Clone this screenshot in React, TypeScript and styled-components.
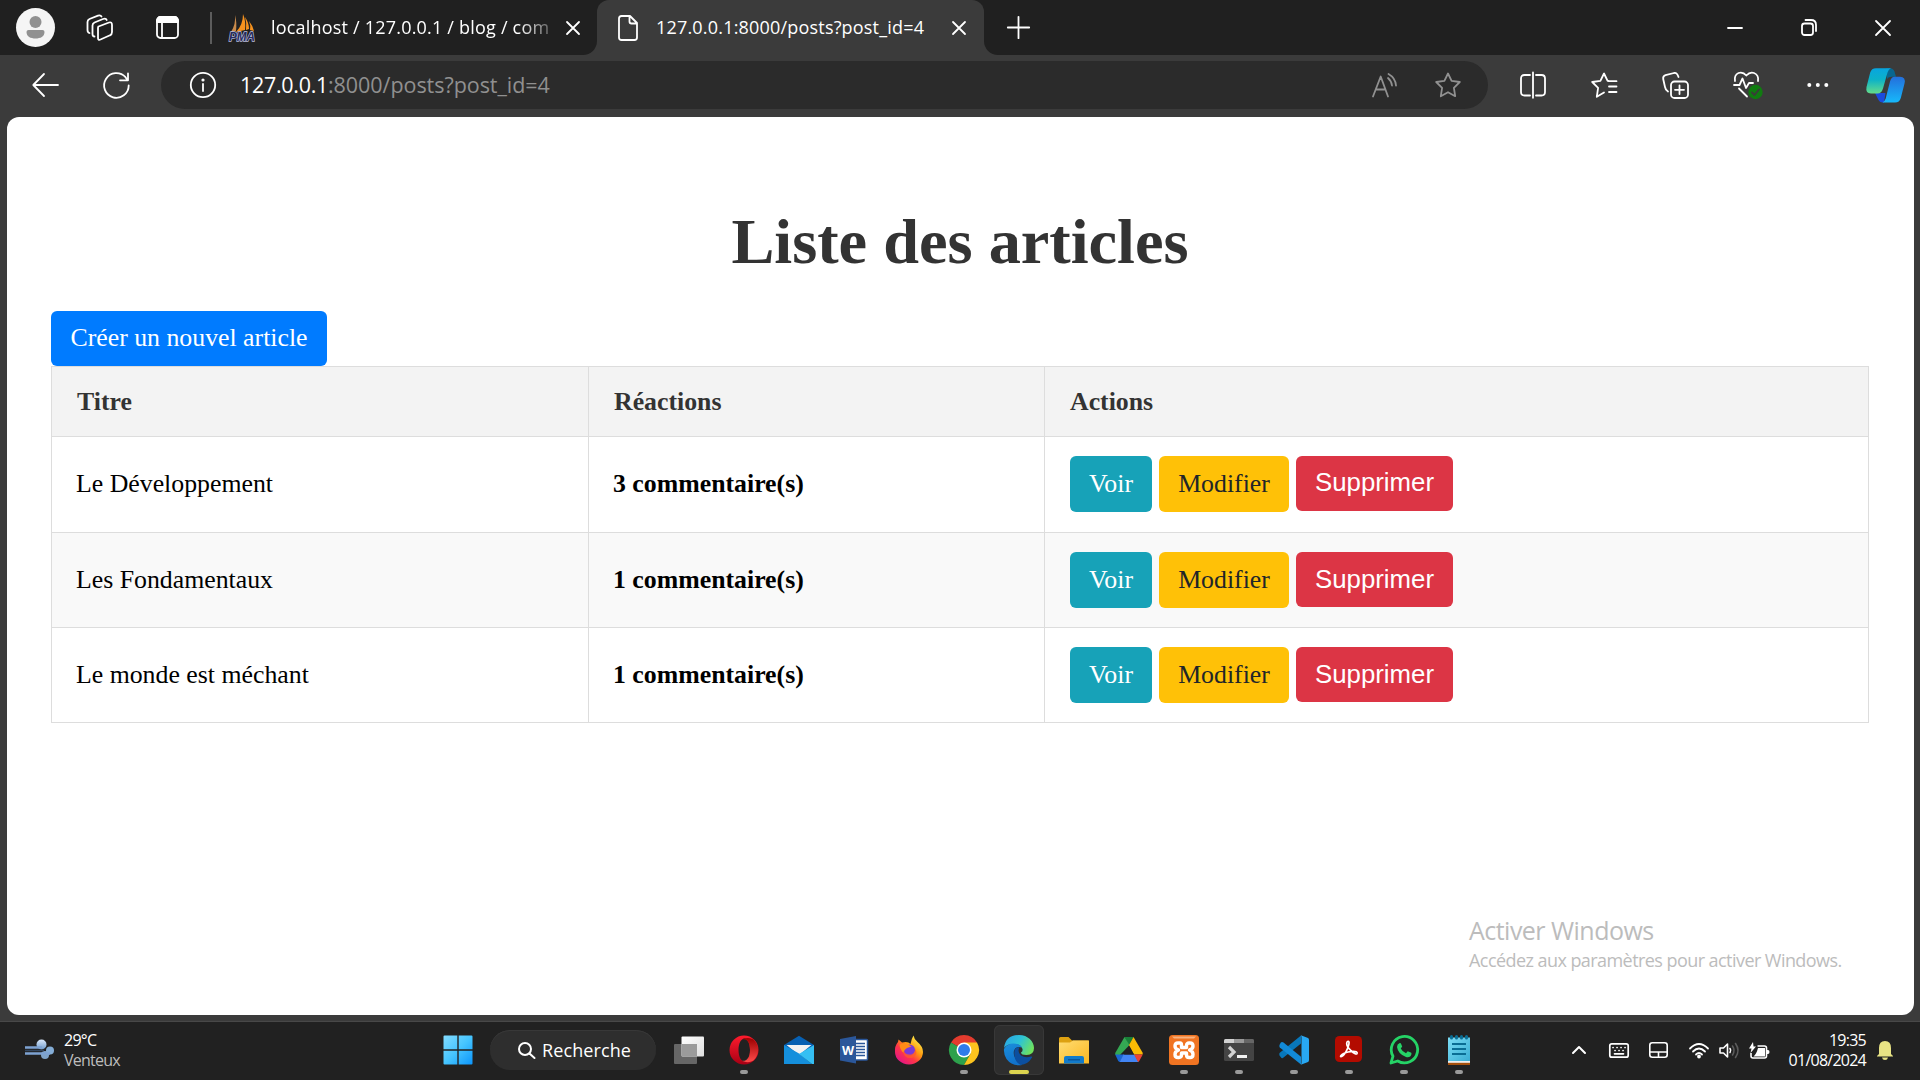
import React from 'react';
import styled, { createGlobalStyle } from 'styled-components';

const UI = '"Open Sans", "Noto Sans", sans-serif';
const SERIF = '"Liberation Serif", "Times New Roman", serif';

const Global = createGlobalStyle`
  *, *::before, *::after { box-sizing: border-box; }
  html, body { margin: 0; padding: 0; background: #202020; overflow: hidden; }
  svg { display: block; flex: none; overflow: visible; }
`;

const Screen = styled.div`
  width: 1920px;
  height: 1080px;
  display: flex;
  flex-direction: column;
  background: #3b3b3b;
  overflow: hidden;
  font-family: ${UI};
  color: #fff;
`;

/* Tab strip */
const TabStrip = styled.header`
  display: flex;
  height: 55px;
  flex: none;
`;
const StripStart = styled.div`
  width: 597px;
  height: 55px;
  display: flex;
  align-items: center;
  padding-left: 16px;
  background: #202020;
  border-bottom-right-radius: 14px;
`;
const StripEnd = styled.div`
  flex: 1;
  height: 55px;
  display: flex;
  align-items: center;
  justify-content: space-between;
  padding: 0 29px 0 23px;
  background: #202020;
  border-bottom-left-radius: 14px;
`;
const ActiveSlot = styled.div`
  width: 387px;
  background: linear-gradient(#202020 50%, #3b3b3b 50%);
`;
const ActiveTab = styled.div`
  height: 55px;
  display: flex;
  align-items: center;
  padding-left: 21px;
  background: #3b3b3b;
  border-radius: 12px 12px 0 0;
`;
const Slot = styled.span<{ $ml?: number }>`
  display: flex;
  flex: none;
  margin-left: ${p => p.$ml ?? 0}px;
`;
const Divider = styled.span`
  width: 2px;
  height: 32px;
  margin-left: 31px;
  background: #5c5c5c;
`;
const TabLabel = styled.span<{ $w: number; $ls: number; $fade?: boolean }>`
  width: ${p => p.$w}px;
  white-space: nowrap;
  font-size: 18px;
  line-height: 26px;
  padding-bottom: 1px;
  letter-spacing: ${p => p.$ls}px;
  ${p => p.$fade && 'mask-image: linear-gradient(90deg, #000 88%, transparent 104%);'}
`;
const WindowButtons = styled.div`
  display: flex;
  align-items: center;
  gap: 58px;
`;

/* Toolbar */
const Toolbar = styled.nav`
  height: 62px;
  flex: none;
  display: flex;
  align-items: center;
  padding: 0 0 2px 32px;
`;
const AddressBar = styled.div`
  width: 1327px;
  height: 48px;
  margin-left: 31px;
  padding: 0 27px 0 29px;
  display: flex;
  align-items: center;
  border-radius: 24px;
  background: #2b2b2b;
`;
const Url = styled.span`
  flex: 1;
  margin-left: 24px;
  font-size: 21.5px;
  line-height: 30px;
  letter-spacing: -0.05px;
  color: #909090;
  white-space: nowrap;
`;
const Host = styled.span`
  letter-spacing: -0.3px;
  color: #fff;
`;

/* Page */
const Frame = styled.div`
  flex: 1;
  padding: 0 6px 6px 7px;
`;
const Page = styled.main`
  position: relative;
  height: 898px;
  padding: 84px 45px 0 44px;
  border-radius: 12px;
  background: #fff;
  font-family: ${SERIF};
  font-size: 25.8px;
  color: #000;
`;
const Title = styled.h1`
  margin: 0;
  height: 110px;
  font-size: 64.3px;
  line-height: 82px;
  font-weight: 700;
  text-align: center;
  color: #333;
`;
const Button = styled.button<{ $bg: string; $fg?: string; $w: number; $h?: number; $sans?: boolean }>`
  width: ${p => p.$w}px;
  height: ${p => p.$h ?? 56}px;
  padding: 0 0 ${p => (p.$sans ? 2 : 0)}px;
  display: flex;
  align-items: center;
  justify-content: center;
  border: 0;
  border-radius: 6px;
  background: ${p => p.$bg};
  color: ${p => p.$fg ?? '#fff'};
  font-family: ${p => (p.$sans ? '"Liberation Sans", Arial, sans-serif' : SERIF)};
  font-size: 25.8px;
  line-height: 30px;
`;
const CreateButton = styled(Button)`
  padding-bottom: 2px;
`;
const Table = styled.table`
  width: 1818px;
  table-layout: fixed;
  border-collapse: collapse;
`;
const HeadCell = styled.th<{ $w?: number }>`
  width: ${p => (p.$w ? p.$w + 'px' : 'auto')};
  height: 70px;
  padding: 0 25px;
  border: 1px solid #ddd;
  background: #f3f3f3;
  color: #333;
  text-align: left;
`;
const BodyRow = styled.tr<{ $h: number }>`
  height: ${p => p.$h}px;
  &:nth-child(even) { background: #f9f9f9; }
  &:first-child > td { padding-bottom: 2px; }
`;
const Cell = styled.td`
  padding: 0 24px;
  border: 1px solid #ddd;
`;
const Actions = styled.div`
  display: flex;
  align-items: flex-start;
  gap: 7px;
  padding-left: 1px;
`;
const Watermark = styled.aside`
  position: absolute;
  left: 1462px;
  top: 796px;
  font-family: ${UI};
  color: #bcbcbc;
  white-space: nowrap;
`;
const WatermarkTitle = styled.div`
  font-size: 25px;
  line-height: 34px;
  letter-spacing: -0.53px;
`;
const WatermarkText = styled.div`
  font-size: 18px;
  line-height: 26px;
  letter-spacing: -0.56px;
`;

/* Taskbar */
const Taskbar = styled.footer`
  height: 59px;
  flex: none;
  display: flex;
  align-items: stretch;
  padding: 0 27px 2px 25px;
  background: #212121;
  border-top: 1px solid #484848;
`;
const Weather = styled.div`
  width: 405px;
  display: flex;
  align-items: center;
  gap: 9px;
`;
const SmallText = styled.div<{ $right?: boolean }>`
  display: flex;
  flex-direction: column;
  font-size: 16px;
  line-height: 20px;
  letter-spacing: -0.75px;
  white-space: nowrap;
  text-align: ${p => (p.$right ? 'right' : 'left')};
`;
const Muted = styled.span`
  color: #bdbdbd;
`;
const Apps = styled.div`
  display: flex;
  flex: 1;
  align-items: center;
`;
const AppButton = styled.div<{ $active?: boolean }>`
  width: 50px;
  height: 50px;
  margin: 0 2.5px;
  display: flex;
  flex-direction: column;
  align-items: center;
  padding-top: 10px;
  border-radius: 6px;
  ${p => p.$active && 'background: #2e2e2e; box-shadow: inset 0 0 0 1px #383838;'}
`;
const Mark = styled.span<{ $active?: boolean }>`
  width: ${p => (p.$active ? 20 : 8)}px;
  height: 4px;
  margin-top: 5px;
  border-radius: 2px;
  background: ${p => (p.$active ? '#dcd44f' : '#9a9a9a')};
`;
const Search = styled.div`
  width: 166px;
  height: 40px;
  margin: 0 5px 0 5px;
  padding-left: 28px;
  display: flex;
  align-items: center;
  gap: 6px;
  border-radius: 20px;
  background: #2e2e2e;
  box-shadow: inset 0 1px 0 #383838;
  font-size: 18px;
  letter-spacing: 0.1px;
`;
const Tray = styled.div`
  display: flex;
  align-items: center;
`;

/* Line icons */
type LineProps = { w: number; h?: number; sw?: number; c?: string; children: React.ReactNode };
const Line = ({ w, h = w, sw = 1.8, c = '#fff', children }: LineProps) => (
  <svg width={w} height={h} viewBox={`0 0 ${w} ${h}`} fill="none" stroke={c} strokeWidth={sw} strokeLinecap="round" strokeLinejoin="round">
    {children}
  </svg>
);
const Cross = ({ s, sw = 1.8 }: { s: number; sw?: number }) => (
  <Line w={s} sw={sw}><path d={`M1 1L${s - 1} ${s - 1}M${s - 1} 1L1 ${s - 1}`} /></Line>
);
const Avatar = () => (
  <svg width="39" height="39" viewBox="0 0 39 39">
    <circle cx="19.5" cy="19.5" r="19.5" fill="#f5f5f5" />
    <circle cx="19.5" cy="14" r="6" fill="#919191" />
    <path d="M12.5 22h14a2 2 0 0 1 2 2c0 4.500-4 6.500-9 6.500s-9-2-9-6.500a2 2 0 0 1 2-2z" fill="#919191" />
  </svg>
);
const Workspaces = () => (
  <Line w={28}>
    <path d="M12.500 12.500L23 8.500Q26 7.500 26 11V18Q26 20.500 24 21.300L14.500 25.500Q12 26.500 12 24V14Q12 13 12.500 12.500z" />
    <path d="M8.500 22.500Q6.500 22.500 6.500 20V11.500Q6.500 9.500 8.500 8.500L17 5Q20 4 20.700 6" />
    <path d="M3.500 19Q1.500 18.500 1.500 16V8Q1.500 6 3.500 5L12 1.700Q14.500 .8 15.500 2.500" />
  </Line>
);
const TabActions = () => (
  <Line w={23}><rect x="1" y="1" width="21" height="21" rx="3.500" /><path d="M1 4.500a3.500 3.500 0 0 1 3.500-3.500h14a3.500 3.500 0 0 1 3.500 3.500V6H1z" fill="#fff" /><path d="M6 7V22" /></Line>
);
const PmaLogo = () => (
  <svg width="27" height="28" viewBox="0 0 27 28">
    <path d="M6 1Q7 10 2 18L7 17Q8 8 6 1z" fill="#c98b4b" />
    <path d="M14 0Q14 11 7 18L16 16Q17 7 14 0z" fill="#f6921e" />
    <path d="M16 3Q20 9 20 15L17 16Q18 9 16 3zM20 7Q24 12 25 17L21 16Q22 12 20 7z" fill="#f6921e" />
    <text x="0" y="27" textLength="26" lengthAdjust="spacingAndGlyphs" fontFamily="Liberation Sans, sans-serif" fontSize="12" fontWeight="700" fontStyle="italic" fill="#272c5c" stroke="#b9bddd" strokeWidth="1.300" paintOrder="stroke">PMA</text>
  </svg>
);
const PageIcon = () => (
  <Line w={20} h={26}><path d="M3.500 1H12L19 8V22.500Q19 25 16.500 25H3.500Q1 25 1 22.500V3.500Q1 1 3.500 1zM11.500 1V6.500Q11.500 8.500 13.500 8.500H19" /></Line>
);
const Plus = () => <Line w={23}><path d="M11.500 .8V22.200M.8 11.500H22.200" /></Line>;
const Minimize = () => <Line w={16}><path d="M1 8H15" /></Line>;
const Restore = () => (
  <Line w={16} h={17}><rect x="1" y="4.500" width="11" height="11.500" rx="2.500" /><path d="M4.500 1H10Q15 1 15 6V12" /></Line>
);
const Back = () => <Line w={27} h={24}><path d="M26 12H1.500M12 1L1.300 12L12 23" /></Line>;
const Refresh = () => <Line w={27}><path d="M25.700 13.500A12.300 12.300 0 1 1 22.500 5.200L24.500 8M25 1.500V8.300H17" /></Line>;
const Info = () => (
  <Line w={26}><circle cx="13" cy="13" r="12.200" /><path d="M13 12V19" /><circle cx="13" cy="8" r=".7" fill="#fff" /></Line>
);
const ReadAloud = () => (
  <Line w={25} c="#919191"><path d="M1 23.500L8.700 3.500L16 23.500M4 16.500H13.500M16 5Q19.500 8 20 12.500M16.500 1Q23.500 5 24 12.500" /></Line>
);
const starPath = 'M13 1.500L16.600 8.900L24.800 10L18.900 15.800L20.200 24.200L13 20.200L5.800 24.200L7.100 15.800L1.200 10L9.400 8.900z';
const Star = () => <Line w={26} c="#919191"><path d={starPath} /></Line>;
const Split = () => (
  <Line w={26}><path d="M10 3H4.500Q1 3 1 6.500V20Q1 23.500 4.500 23.500H10M16 3H21.500Q25 3 25 6.500V20Q25 23.500 21.500 23.500H16M13 .5V25.800" /></Line>
);
const Favorites = () => (
  <Line w={27}><path d="M18 9.200H25.500M18 14.500H25.500M18 20H25.500M17.500 9L16.600 8.900L13 1.500L9.400 8.900L1.200 10L7.100 15.800L5.800 24.800L13 20.500" /></Line>
);
const Collections = () => (
  <Line w={27}><rect x="9" y="9.500" width="17" height="16.500" rx="3.500" /><path d="M17.500 13.500V22M13 17.800H22M6 19.500Q3.500 18 3 15L1.200 7Q.8 4 3.500 3.200L12 1Q15 .3 16.500 5" /></Line>
);
const Health = () => (
  <svg width="30" height="28" viewBox="0 0 30 28" fill="none" stroke="#fff" strokeWidth="1.800" strokeLinecap="round" strokeLinejoin="round">
    <path d="M2 10Q1 4 5.500 2Q10 .5 13.300 4.500Q17 .5 21 2Q26 4 25 10M1 14H6.500L9.500 7.500L13 17L16 12H20M6 17.500L14 25.500" />
    <circle cx="22.500" cy="21" r="7.200" fill="#107c10" stroke="none" />
    <path d="M19 21.500L21.500 24L26 18.500" stroke="#3b3b3b" />
  </svg>
);
const More = () => (
  <svg width="22" height="6" viewBox="0 0 22 6" fill="#fff"><circle cx="2.300" cy="3" r="2" /><circle cx="10.800" cy="3" r="2" /><circle cx="19.300" cy="3" r="2" /></svg>
);
const Copilot = () => (
  <svg width="39" height="35" viewBox="0 0 39 35">
    <defs>
      <linearGradient id="cp1" x1="0" y1="0" x2="0" y2="1"><stop offset="0" stopColor="#08a5e0" /><stop offset=".45" stopColor="#0cb2c8" /><stop offset="1" stopColor="#64dc8a" /></linearGradient>
      <linearGradient id="cp2" x1="0" y1="0" x2="0" y2="1"><stop offset="0" stopColor="#246fdc" /><stop offset="1" stopColor="#16b9fb" /></linearGradient>
    </defs>
    <path d="M20 .2H24Q27.500 .5 28.500 3.500L30 8.800H25.500Q22.500 8.800 21 11z" fill="#08668f" />
    <path d="M9 25H19.500L18 34.500H17Q13.500 34.500 12 31z" fill="#1b4bdc" />
    <path d="M10 .2H25Q22.500 1 21.500 4.500L17 20.500Q15.500 25.500 11.500 25.500H5Q-.7 25.500 .5 19L4.200 4.500Q5.500 .2 10 .2z" fill="url(#cp1)" />
    <path d="M28.500 8.800H34Q40 9 38.500 15.500L34.800 30Q33.500 34.500 29 34.500H16.500Q18.800 33.500 19.700 30.500L24 13.500Q25.200 8.800 28.500 8.800z" fill="url(#cp2)" />
  </svg>
);

/* Taskbar icons, each on a 30px square */
const Ico = ({ children }: { children: React.ReactNode }) => <svg width="30" height="30" viewBox="0 0 30 30">{children}</svg>;
const Start = () => (
  <Ico>
    <defs><linearGradient id="win" x1="0" y1="0" x2="1" y2="1"><stop stopColor="#83dcff" /><stop offset=".5" stopColor="#46c5ff" /><stop offset="1" stopColor="#0c95fb" /></linearGradient></defs>
    <path d="M.5 1.500a1 1 0 0 1 1-1H14.300V14.300H.5zM15.700 .5H28.500a1 1 0 0 1 1 1V14.300H15.700zM.5 15.700H14.300V29.500H1.500a1 1 0 0 1-1-1zM15.700 15.700H29.500V28.500a1 1 0 0 1-1 1H15.700z" fill="url(#win)" />
  </Ico>
);
const TaskView = () => (
  <Ico>
    <defs><linearGradient id="tv" x1="0" y1="0" x2="1" y2="1"><stop stopColor="#fff" /><stop offset="1" stopColor="#dedede" /></linearGradient></defs>
    <rect x="0" y="9" width="23" height="20" rx="1" fill="#666" /><rect x="7.500" y="1.500" width="22.500" height="20" rx="1" fill="url(#tv)" /><path d="M7.500 9H23V21.500H8.500a1 1 0 0 1-1-1z" fill="#9b9b9b" />
  </Ico>
);
const Opera = () => (
  <Ico>
    <defs><linearGradient id="op" x1="0" y1="0" x2="0" y2="1"><stop stopColor="#ff1b2d" /><stop offset="1" stopColor="#a70014" /></linearGradient><linearGradient id="op2" x1="0" y1="0" x2="0" y2="1"><stop stopColor="#9c0000" /><stop offset="1" stopColor="#ff4b4b" /></linearGradient></defs>
    <path d="M15 .5a14.500 14.500 0 1 0 0 29 14.500 14.500 0 0 0 0-29zM15.500 3.500C19 3.500 21 8.500 21 15S19 26.500 15.500 26.500 9.500 21.500 9.500 15 12 3.500 15.500 3.500z" fill="url(#op)" fillRule="evenodd" />
    <path d="M11.500 5.500C17 1 23.500 3.500 25 5A14.500 14.500 0 0 1 25 25C22 27.500 16 28.500 11.500 24.500C14 27.500 21 26 21 15S14.500 2.500 11.500 5.500z" fill="url(#op2)" />
  </Ico>
);
const Mail = () => (
  <Ico>
    <path d="M0 10L15 .8L30 10V20H0z" fill="#0760b2" /><path d="M2.500 10H27.500L15 20z" fill="#f2f2f2" /><path d="M0 10V29H28L15 18.500z" fill="#158fdc" /><path d="M15 19L28 29H30V10z" fill="#35bff3" />
  </Ico>
);
const Word = () => (
  <Ico>
    <rect x="13" y="4.500" width="15.500" height="20.500" rx="1" fill="#fff" stroke="#2b579a" strokeWidth="1.500" />
    <path d="M16 8.500H26M16 11.500H26M16 14.500H26M16 17.500H26M16 20.500H26" stroke="#2b579a" strokeWidth="1.600" />
    <path d="M1 4L17 1V28.500L1 25.500z" fill="#2b579a" />
    <text x="9" y="19.500" textAnchor="middle" fontFamily="Open Sans, sans-serif" fontWeight="700" fontSize="12.500" fill="#fff">W</text>
  </Ico>
);
const Firefox = () => (
  <Ico>
    <defs><linearGradient id="ff" x1=".9" y1=".1" x2=".2" y2=".95"><stop stopColor="#fff44f" /><stop offset=".4" stopColor="#ff980e" /><stop offset=".65" stopColor="#ff3647" /><stop offset="1" stopColor="#e31587" /></linearGradient></defs>
    <path d="M19.500 .5Q20 4 23.500 7Q29 11.500 29 17A14 12.500 0 0 1 1 17Q.5 11 4 7L4.500 4.500L8 7.500Q14 6 16.500 9Q17.500 3.500 19.500 .5z" fill="url(#ff)" />
    <circle cx="15.500" cy="15" r="5.500" fill="#7a3ad8" /><path d="M5.500 9.500Q11 6.500 17.500 11.500L13 13Q10 14.500 9.500 18Q6 15 5.500 9.500z" fill="#ff8a16" /><path d="M9 16Q12 20 17 19.500Q22 18 21 13Q25 20 18 23Q10 24 9 16z" fill="#ff5a2c" opacity=".75" />
  </Ico>
);
const Chrome = () => (
  <Ico>
    <path d="M15 15L2 7.500A15 15 0 0 1 28 7.500z" fill="#e33b2e" /><path d="M15 15L2 7.500A15 15 0 0 0 15 30L21.500 18.700z" fill="#2da14c" /><path d="M15 7.500H28A15 15 0 0 1 15 30L21.500 18.700z" fill="#fcc31e" /><circle cx="15" cy="15" r="7.500" fill="#fff" /><circle cx="15" cy="15" r="6" fill="#2f7bea" />
  </Ico>
);
const Edge = () => (
  <Ico>
    <defs>
      <linearGradient id="eg1" x1="0" y1=".2" x2="1" y2=".6"><stop stopColor="#2aa5e5" /><stop offset=".5" stopColor="#2dc3d5" /><stop offset="1" stopColor="#70e35b" /></linearGradient>
      <linearGradient id="eg2" x1="0" y1="0" x2=".3" y2="1"><stop stopColor="#1b8edb" /><stop offset="1" stopColor="#1172cb" /></linearGradient>
    </defs>
    <path d="M0 13Q1.500 0 15 0C24 0 30 6.500 30 13Q30 20 22.500 20Q17 20 17 17.500Q19 16.500 18.500 14Q17 9 9 9Q3 9 0 13z" fill="url(#eg1)" />
    <path d="M0 14Q3 8.500 9.500 8.500Q16 8.800 18 12.500Q12 10.500 10 15.500Q8.500 22 15 27L18 30Q8 31.500 2.500 24Q-.5 19 0 14z" fill="url(#eg2)" />
    <path d="M10.500 15Q12 11.500 15.500 12.500Q13 17 17 20.500Q21.500 23.500 27 21.500Q28.500 21 28 22.500Q24 29.500 16.500 30Q9 26 10.500 15z" fill="#0c4f9f" />
  </Ico>
);
const Explorer = () => (
  <Ico>
    <defs><linearGradient id="ex" x1="0" y1="0" x2="1" y2="1"><stop stopColor="#ffdc72" /><stop offset="1" stopColor="#fbb822" /></linearGradient></defs>
    <path d="M0 3.500Q0 2 1.500 2H9.500L13 5.500H29Q30 5.500 30 7V12H0z" fill="#dda111" /><path d="M0 7.500H11L14 5.500H30V28.500H0z" fill="url(#ex)" /><path d="M5 28.500V23Q5 21 7 21H23Q25 21 25 23V28.500z" fill="#127bcb" /><path d="M9 24.800H21" stroke="#0b4f92" strokeWidth="1.200" />
  </Ico>
);
const Drive = () => (
  <Ico>
    <path d="M10.500 2H19.500L15 10z" fill="#188038" /><path d="M10.500 2L1.500 17.500Q.7 19 1.500 20H6L15.500 10z" fill="#34a853" /><path d="M19.500 2L28.500 17.500Q29 18.500 28.500 19.500H20L15 10z" fill="#fbbc04" /><path d="M1.200 19.500H10L6 27Q4.500 26.500 4 25.500z" fill="#1967d2" /><path d="M9.500 19.500H20.500L24.500 27H5.700z" fill="#4285f4" /><path d="M20 19.500H28.800L25.500 25.500Q25 26.500 24 27z" fill="#ea4335" /><path d="M15 11L20 19.500H10z" fill="#212121" />
  </Ico>
);
const Xampp = () => (
  <Ico>
    <rect width="30" height="30" rx="3.500" fill="#f07422" /><path d="M3 1.500H27L25 3.500H5z" fill="#f8b27f" />
    <path d="M11 8H9Q6 8 6 11Q6 14 9.500 15Q6 16 6 19.500Q6 22.500 9 22.500H10Q12.500 22.500 12.500 20V18H17.500V20Q17.500 22.500 20 22.500H21Q24 22.500 24 19.500Q24 16 20.500 15Q24 14 24 11Q24 8 21 8H20Q17.500 8 17.500 10.500V12.500H12.500V10Q12.500 8 11 8z" fill="none" stroke="#fff" strokeWidth="3.400" strokeLinejoin="round" />
  </Ico>
);
const Terminal = () => (
  <Ico>
    <rect x="0" y="4" width="30" height="22" rx="1.500" fill="#444" /><path d="M0 8V5.500Q0 4 1.500 4H10V8z" fill="#d1d1d1" /><path d="M10 4H20V8H10z" fill="#999" /><path d="M20 4H28.500Q30 4 30 5.500V8H20z" fill="#666" /><path d="M5 12L10 17L5 22" fill="none" stroke="#d2d2d2" strokeWidth="3.200" /><path d="M13 21.500H23" stroke="#f2f2f2" strokeWidth="3" />
  </Ico>
);
const VsCode = () => (
  <Ico>
    <path d="M2.500 23L.5 20.500Q0 19 .5 18L22 .5V8.500L4.500 22.500Q3.500 23.500 2.500 23z" fill="#0877ba" /><path d="M.5 10Q0 11 .8 12.500L22 29.500V21.700L4.500 7.500Q3 6.500 1.800 7.500z" fill="#128ad7" /><path d="M21.800 .3L29 3Q30 3.600 30 5V25Q30 26.500 29 27L21.800 29.800Q22.500 29 22.500 27.500V2.500Q22.500 1 21.800 .3z" fill="#28a8f3" />
  </Ico>
);
const Acrobat = () => (
  <Ico>
    <rect x="1" y="1" width="27" height="26" rx="4.500" fill="#b30b00" />
    <path d="M13.500 6.500C17.500 4.500 13 17 9 20.500C4.500 24 6.500 18.500 14 17C20 15.800 24 16.500 23 18.500C21.500 21 12.500 12.500 12.700 8.500Q12.800 6.800 13.500 6.500z" fill="none" stroke="#fff" strokeWidth="1.700" />
  </Ico>
);
const WhatsApp = () => (
  <Ico>
    <path d="M2 28L4 21.200A13.200 13.200 0 1 1 8.700 26z" fill="none" stroke="#25d366" strokeWidth="2.800" strokeLinejoin="round" />
    <path d="M10.700 8Q8 9 8 12Q9 19 17 22Q21.500 23 22.500 19L22.300 17.800L18.700 16.200L17 18.300Q13.500 17 11.800 13.500L13.200 11.500L11.800 8.200z" fill="#25d366" />
  </Ico>
);
const Notepad = () => (
  <Ico>
    <defs><linearGradient id="np" x1="0" y1="0" x2="1" y2="1"><stop stopColor="#7bddf5" /><stop offset="1" stopColor="#38acd3" /></linearGradient></defs>
    <path d="M4 2.500H26V27H4z" fill="url(#np)" /><path d="M4 26H26V28H4z" fill="#eee" /><path d="M4 27.800H26V30H4z" fill="#a5500c" /><path d="M8 9H22M8 14H22M8 19H22" stroke="#0a6d94" strokeWidth="2" />
    <path d="M7.500 1.500V3M12.500 1.500V3M17.500 1.500V3M22.500 1.500V3" stroke="#0a6d94" strokeWidth="3" strokeLinecap="round" />
  </Ico>
);
const Wind = () => (
  <svg width="30" height="22" viewBox="0 0 30 22">
    <defs><linearGradient id="wd" x1="0" y1="0" x2="0" y2="1"><stop stopColor="#d9e8fb" /><stop offset="1" stopColor="#6f9bcc" /></linearGradient></defs>
    <circle cx="20" cy="16" r="4" fill="#7fa3c9" /><circle cx="25" cy="11.500" r="4" fill="#84add6" /><circle cx="16.500" cy="5.500" r="5" fill="url(#wd)" />
    <path d="M0 8.500H17M0 14.500H25" stroke="#7da2d2" strokeWidth="2.600" /><path d="M0 11.500H19" stroke="#33465e" strokeWidth="1.500" />
  </svg>
);
const Chevron = () => <Line w={14} h={8} sw={2}><path d="M1 7L7 1L13 7" /></Line>;
const Keyboard = () => (
  <Line w={20} h={15} sw={1.7}><rect x=".8" y=".8" width="18.400" height="13.400" rx="2" /><path d="M4 4.500H4.100M8 4.500H8.100M12 4.500H12.100M16 4.500H16.100M6 7.500H6.100M10 7.500H10.100M14 7.500H14.100M5.500 10.800H14.500" /></Line>
);
const Touchpad = () => <Line w={19} h={16} sw={1.6}><rect x=".8" y=".8" width="17.400" height="14.400" rx="2.500" /><path d="M1 10H18M9.500 10V15" /></Line>;
const Wifi = () => (
  <Line w={20} h={15} sw={1.8}><path d="M1 5.500Q10-3.500 19 5.500M4 8.500Q10 2.500 16 8.500M7 11.500Q10 8.500 13 11.500" /><circle cx="10" cy="13.500" r="1" fill="#fff" /></Line>
);
const Speaker = () => (
  <Line w={20} h={17} sw={1.6}><path d="M1 6H4.500L8.500 2V15L4.500 11H1zM11 6.500Q12.500 8.500 11 10.500" /><path d="M13.500 4Q16.500 8.500 13.500 13M16.500 1.500Q21.500 8.500 16.500 15.500" stroke="#5c5c5c" /></Line>
);
const Battery = () => (
  <svg width="21" height="17" viewBox="0 0 21 17">
    <path d="M8.500 4H15.500Q17.500 4 17.500 6V14Q17.500 16 15.500 16H4Q2 16 2 14V11" fill="none" stroke="#fff" strokeWidth="1.600" /><path d="M9 6H16V14.500H4.500Q7.500 12 9 6z" fill="#fff" /><path d="M18 8H19Q20.500 8 20.500 10T19 12H18z" fill="#fff" /><path d="M4 0L0 6.500H2.500L1.500 11L7 4.500H4.500z" fill="#fff" />
  </svg>
);
const Bell = () => (
  <svg width="16" height="19" viewBox="0 0 16 19"><path d="M2 13V7Q2 0 8 0T14 7V13L16 15V15.500H0V15z" fill="#e8e384" /><path d="M5 16.500H11Q10.500 19 8 19T5 16.500z" fill="#e8e384" /></svg>
);

const apps: { name: string; Icon: React.FC; open?: boolean; active?: boolean }[] = [
  { name: 'taskview', Icon: TaskView },
  { name: 'opera', Icon: Opera, open: true },
  { name: 'mail', Icon: Mail },
  { name: 'word', Icon: Word },
  { name: 'firefox', Icon: Firefox },
  { name: 'chrome', Icon: Chrome, open: true },
  { name: 'edge', Icon: Edge, open: true, active: true },
  { name: 'explorer', Icon: Explorer },
  { name: 'drive', Icon: Drive },
  { name: 'xampp', Icon: Xampp, open: true },
  { name: 'terminal', Icon: Terminal, open: true },
  { name: 'vscode', Icon: VsCode, open: true },
  { name: 'acrobat', Icon: Acrobat, open: true },
  { name: 'whatsapp', Icon: WhatsApp, open: true },
  { name: 'notepad', Icon: Notepad, open: true },
];

const posts = [
  { title: 'Le Développement', comments: 3, height: 96 },
  { title: 'Les Fondamentaux', comments: 1, height: 95 },
  { title: 'Le monde est méchant', comments: 1, height: 95 },
];

export default function App() {
  return (
    <Screen>
      <Global />
      <TabStrip>
        <StripStart>
          <Avatar />
          <Slot $ml={31}><Workspaces /></Slot>
          <Slot $ml={42}><TabActions /></Slot>
          <Divider />
          <Slot $ml={17}><PmaLogo /></Slot>
          <Slot $ml={15}><TabLabel $w={281} $ls={0.2} $fade>localhost / 127.0.0.1 / blog / com</TabLabel></Slot>
          <Slot $ml={14}><Cross s={14} /></Slot>
        </StripStart>
        <ActiveSlot>
          <ActiveTab>
            <PageIcon />
            <Slot $ml={18}><TabLabel $w={276} $ls={0.19}>127.0.0.1:8000/posts?post_id=4</TabLabel></Slot>
            <Slot $ml={20}><Cross s={14} /></Slot>
          </ActiveTab>
        </ActiveSlot>
        <StripEnd>
          <Plus />
          <WindowButtons><Minimize /><Restore /><Cross s={16} /></WindowButtons>
        </StripEnd>
      </TabStrip>
      <Toolbar>
        <Back />
        <Slot $ml={44}><Refresh /></Slot>
        <AddressBar>
          <Info />
          <Url><Host>127.0.0.1</Host>:8000/posts?post_id=4</Url>
          <ReadAloud />
          <Slot $ml={38}><Star /></Slot>
        </AddressBar>
        <Slot $ml={32}><Split /></Slot>
        <Slot $ml={45}><Favorites /></Slot>
        <Slot $ml={44}><Collections /></Slot>
        <Slot $ml={44}><Health /></Slot>
        <Slot $ml={44}><More /></Slot>
        <Slot $ml={37}><Copilot /></Slot>
      </Toolbar>
      <Frame>
        <Page>
          <Title>Liste des articles</Title>
          <CreateButton $bg="#007bff" $w={276} $h={55}>Créer un nouvel article</CreateButton>
          <Table>
            <thead>
              <tr>
                <HeadCell $w={537}>Titre</HeadCell>
                <HeadCell $w={456}>Réactions</HeadCell>
                <HeadCell>Actions</HeadCell>
              </tr>
            </thead>
            <tbody>
              {posts.map(p => (
                <BodyRow key={p.title} $h={p.height}>
                  <Cell>{p.title}</Cell>
                  <Cell><strong>{p.comments} commentaire(s)</strong></Cell>
                  <Cell>
                    <Actions>
                      <Button $bg="#17a2b8" $w={82}>Voir</Button>
                      <Button $bg="#ffc107" $fg="#212529" $w={130}>Modifier</Button>
                      <Button $bg="#dc3545" $w={157} $h={55} $sans>Supprimer</Button>
                    </Actions>
                  </Cell>
                </BodyRow>
              ))}
            </tbody>
          </Table>
          <Watermark>
            <WatermarkTitle>Activer Windows</WatermarkTitle>
            <WatermarkText>Accédez aux paramètres pour activer Windows.</WatermarkText>
          </Watermark>
        </Page>
      </Frame>
      <Taskbar>
        <Weather>
          <Wind />
          <SmallText><span>29°C</span><Muted>Venteux</Muted></SmallText>
        </Weather>
        <Apps>
          <AppButton><Start /></AppButton>
          <Search>
            <Line w={18} h={17} sw={2}><circle cx="7" cy="7" r="6" /><path d="M11.500 11.500L16.500 16" /></Line>
            Recherche
          </Search>
          {apps.map(({ name, Icon, open, active }) => (
            <AppButton key={name} $active={active}>
              <Icon />
              {open && <Mark $active={active} />}
            </AppButton>
          ))}
        </Apps>
        <Tray>
          <Chevron />
          <Slot $ml={23}><Keyboard /></Slot>
          <Slot $ml={20}><Touchpad /></Slot>
          <Slot $ml={21}><Wifi /></Slot>
          <Slot $ml={10}><Speaker /></Slot>
          <Slot $ml={10}><Battery /></Slot>
          <Slot $ml={19}><SmallText $right><span>19:35</span><span>01/08/2024</span></SmallText></Slot>
          <Slot $ml={11}><Bell /></Slot>
        </Tray>
      </Taskbar>
    </Screen>
  );
}
